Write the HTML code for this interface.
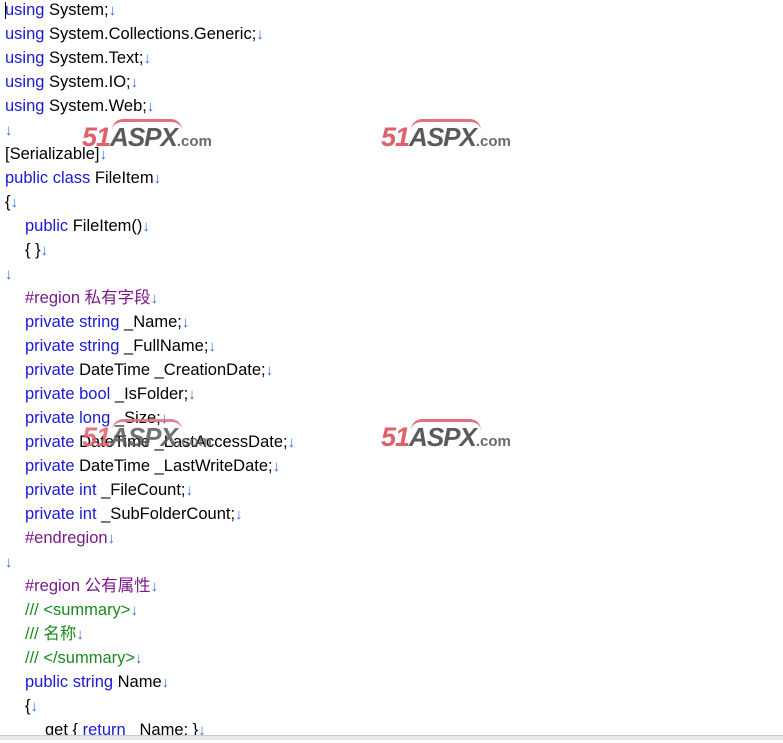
<!DOCTYPE html>
<html><head><meta charset="utf-8"><style>
body{margin:0;width:783px;height:739px;background:#fff;overflow:hidden;position:relative;font-family:"Liberation Sans","Noto Sans CJK SC",sans-serif;font-size:16.5px;color:#000}
.l{position:absolute;height:24px;line-height:24px;white-space:pre}
.k{color:#1a1ad0}.a{color:#2f72d8;font-size:15px}.r{color:#7a1a8a}.c{color:#1a8a1a}
.wm{position:absolute;font-family:"Liberation Sans",sans-serif;font-weight:bold;font-style:italic;white-space:nowrap}
.wm .n{color:#e0606a;font-size:27px;letter-spacing:-1px}
.wm .s{color:#5a5a5a;font-size:26px;letter-spacing:-1px}
.wm .d{color:#6a6a6a;font-size:15px;font-style:normal}
.wm .sw{position:absolute;left:30px;top:-3px;width:70px;height:8px;border-top:3px solid #e07080;border-radius:60px 60px 0 0}
</style></head><body>
<div style="position:absolute;left:5px;top:2px;width:1px;height:17px;background:#000"></div>
<div class="l" style="left:5px;top:-2px"><span class="k">using</span> System;<span class="a">↓</span></div>
<div class="l" style="left:5px;top:22px"><span class="k">using</span> System.Collections.Generic;<span class="a">↓</span></div>
<div class="l" style="left:5px;top:46px"><span class="k">using</span> System.Text;<span class="a">↓</span></div>
<div class="l" style="left:5px;top:70px"><span class="k">using</span> System.IO;<span class="a">↓</span></div>
<div class="l" style="left:5px;top:94px"><span class="k">using</span> System.Web;<span class="a">↓</span></div>
<div class="l" style="left:5px;top:118px"><span class="a">↓</span></div>
<div class="l" style="left:5px;top:142px">[Serializable]<span class="a">↓</span></div>
<div class="l" style="left:5px;top:166px"><span class="k">public class</span> FileItem<span class="a">↓</span></div>
<div class="l" style="left:5px;top:190px">{<span class="a">↓</span></div>
<div class="l" style="left:25px;top:214px"><span class="k">public</span> FileItem()<span class="a">↓</span></div>
<div class="l" style="left:25px;top:238px">{ }<span class="a">↓</span></div>
<div class="l" style="left:5px;top:262px"><span class="a">↓</span></div>
<div class="l" style="left:25px;top:286px"><span class="r">#region 私有字段</span><span class="a">↓</span></div>
<div class="l" style="left:25px;top:310px"><span class="k">private string</span> _Name;<span class="a">↓</span></div>
<div class="l" style="left:25px;top:334px"><span class="k">private string</span> _FullName;<span class="a">↓</span></div>
<div class="l" style="left:25px;top:358px"><span class="k">private</span> DateTime _CreationDate;<span class="a">↓</span></div>
<div class="l" style="left:25px;top:382px"><span class="k">private bool</span> _IsFolder;<span class="a">↓</span></div>
<div class="l" style="left:25px;top:406px"><span class="k">private long</span> _Size;<span class="a">↓</span></div>
<div class="l" style="left:25px;top:430px"><span class="k">private</span> DateTime _LastAccessDate;<span class="a">↓</span></div>
<div class="l" style="left:25px;top:454px"><span class="k">private</span> DateTime _LastWriteDate;<span class="a">↓</span></div>
<div class="l" style="left:25px;top:478px"><span class="k">private int</span> _FileCount;<span class="a">↓</span></div>
<div class="l" style="left:25px;top:502px"><span class="k">private int</span> _SubFolderCount;<span class="a">↓</span></div>
<div class="l" style="left:25px;top:526px"><span class="r">#endregion</span><span class="a">↓</span></div>
<div class="l" style="left:5px;top:550px"><span class="a">↓</span></div>
<div class="l" style="left:25px;top:574px"><span class="r">#region 公有属性</span><span class="a">↓</span></div>
<div class="l" style="left:25px;top:598px"><span class="c">/// &lt;summary&gt;</span><span class="a">↓</span></div>
<div class="l" style="left:25px;top:622px"><span class="c">/// 名称</span><span class="a">↓</span></div>
<div class="l" style="left:25px;top:646px"><span class="c">/// &lt;/summary&gt;</span><span class="a">↓</span></div>
<div class="l" style="left:25px;top:670px"><span class="k">public string</span> Name<span class="a">↓</span></div>
<div class="l" style="left:25px;top:694px">{<span class="a">↓</span></div>
<div class="l" style="left:45px;top:718px">get { <span class="k">return</span> _Name; }<span class="a">↓</span></div>
<div style="position:absolute;left:0;top:735px;width:783px;height:4px;background:#e8e8e8;border-top:1px solid #ccc"></div>

<div class="wm" style="left:82px;top:122px"><div class="sw"></div><span class="n">51</span><span class="s">ASPX</span><span class="d">.com</span></div>
<div class="wm" style="left:381px;top:122px"><div class="sw"></div><span class="n">51</span><span class="s">ASPX</span><span class="d">.com</span></div>
<div class="wm" style="left:82px;top:422px;opacity:.85"><div class="sw"></div><span class="n">51</span><span class="s">ASPX</span><span class="d">.com</span></div>
<div class="wm" style="left:381px;top:422px"><div class="sw"></div><span class="n">51</span><span class="s">ASPX</span><span class="d">.com</span></div>
</body></html>
